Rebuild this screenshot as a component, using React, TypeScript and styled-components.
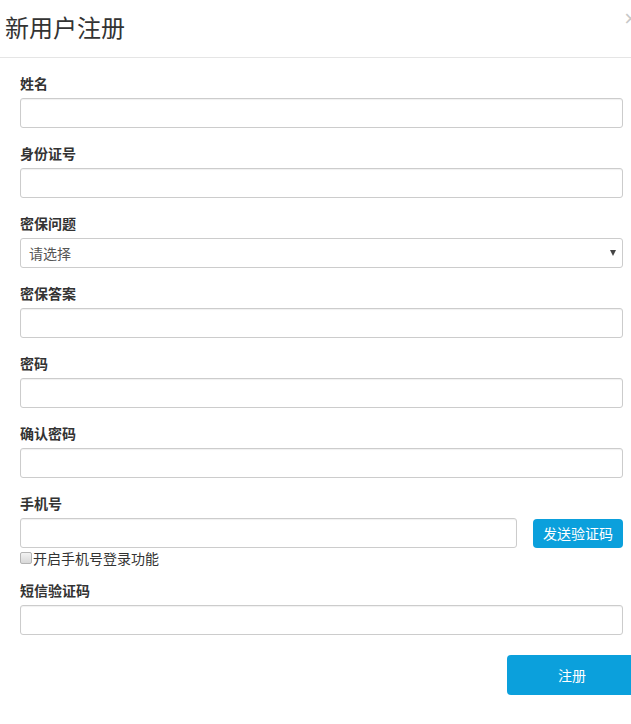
import React from "react";
import styled, { createGlobalStyle } from "styled-components";

const GlobalStyle = createGlobalStyle`
  html, body {
    margin: 0;
    padding: 0;
    background: #fff;
    overflow: hidden;
  }
  body {
    font-family: "Microsoft YaHei", "Noto Sans CJK SC", "Liberation Sans", sans-serif;
    color: #333;
  }
`;

const fields = [
  { label: "姓名", kind: "input" },
  { label: "身份证号", kind: "input" },
  { label: "密保问题", kind: "select" },
  { label: "密保答案", kind: "input" },
  { label: "密码", kind: "password" },
  { label: "确认密码", kind: "password" },
];

export default function App() {
  return (
    <>
      <GlobalStyle />
      <Modal>
        <Header>
          <Title>新用户注册</Title>
          <Close>×</Close>
        </Header>
        <Body>
          {fields.map((f) => (
            <Group key={f.label}>
              <Label>{f.label}</Label>
              {f.kind === "select" ? (
                <SelectBox>
                  <span>请选择</span>
                  <Caret />
                </SelectBox>
              ) : (
                <Input type={f.kind === "password" ? "password" : "text"} />
              )}
            </Group>
          ))}
          <Group>
            <Label>手机号</Label>
            <PhoneRow>
              <Input type="text" />
              <SendButton>发送验证码</SendButton>
            </PhoneRow>
            <CheckRow>
              <Check type="checkbox" />
              开启手机号登录功能
            </CheckRow>
          </Group>
          <Group>
            <Label>短信验证码</Label>
            <Input type="text" />
          </Group>
        </Body>
        <Footer>
          <SubmitButton>注册</SubmitButton>
        </Footer>
      </Modal>
    </>
  );
}

const Modal = styled.div`
  width: 631px;
  height: 724px;
  overflow: hidden;
  background: #fff;
`;
const Header = styled.div`
  position: relative;
  height: 58px;
  border-bottom: 1px solid #e5e5e5;
  box-sizing: border-box;
  padding: 9px 0 0 5px;
`;
const Title = styled.h4`
  margin: 0;
  font-size: 24px;
  font-weight: normal;
  line-height: 36px;
  color: #333;
`;
const Close = styled.span`
  position: absolute;
  top: 6px;
  right: -6px;
  font-size: 22px;
  color: #c8c8c8;
  font-family: "Liberation Sans", sans-serif;
`;
const Body = styled.div`
  padding: 15px 8px 0 20px;
`;
const Group = styled.div`
  margin-bottom: 15px;
`;
const Label = styled.div`
  font-size: 14px;
  font-weight: bold;
  line-height: 20px;
  margin-bottom: 5px;
  color: #333;
`;
const Input = styled.input`
  display: block;
  width: 100%;
  height: 30px;
  box-sizing: border-box;
  border: 1px solid #ccc;
  border-radius: 3px;
  box-shadow: inset 0 1px 1px rgba(0, 0, 0, 0.06);
  padding: 4px 8px;
  font-size: 14px;
  outline: none;
`;
const SelectBox = styled.div`
  display: flex;
  align-items: center;
  justify-content: space-between;
  height: 30px;
  box-sizing: border-box;
  border: 1px solid #ccc;
  border-radius: 3px;
  padding: 0 6px 0 8px;
  font-size: 14px;
  color: #555;
`;
const Caret = styled.span`
  width: 0;
  height: 0;
  border-left: 3px solid transparent;
  border-right: 3px solid transparent;
  border-top: 6px solid #444;
`;
const PhoneRow = styled.div`
  display: flex;
  align-items: center;
  gap: 16px;
`;
const SendButton = styled.button`
  flex: none;
  width: 90px;
  height: 29px;
  border: none;
  border-radius: 4px;
  background: #0ba0dc;
  color: #fff;
  font-size: 14px;
  font-family: inherit;
  padding: 0;
`;
const CheckRow = styled.label`
  display: flex;
  align-items: center;
  font-size: 14px;
  line-height: 18px;
  margin-top: 1px;
  margin-bottom: -2px;
  color: #333;
`;
const Check = styled.input`
  appearance: none;
  width: 12px;
  height: 12px;
  margin: 0 1px 0 0;
  box-sizing: border-box;
  border: 1px solid #b4b4b4;
  border-radius: 2px;
  background: linear-gradient(#f2f2f2, #d8d8d8);
`;
const Footer = styled.div`
  display: flex;
  justify-content: flex-end;
  padding-top: 5px;
  margin-right: -6px;
`;
const SubmitButton = styled.button`
  width: 130px;
  height: 40px;
  border: none;
  border-radius: 4px;
  background: #0ba0dc;
  color: #fff;
  font-size: 14px;
  font-family: inherit;
`;
